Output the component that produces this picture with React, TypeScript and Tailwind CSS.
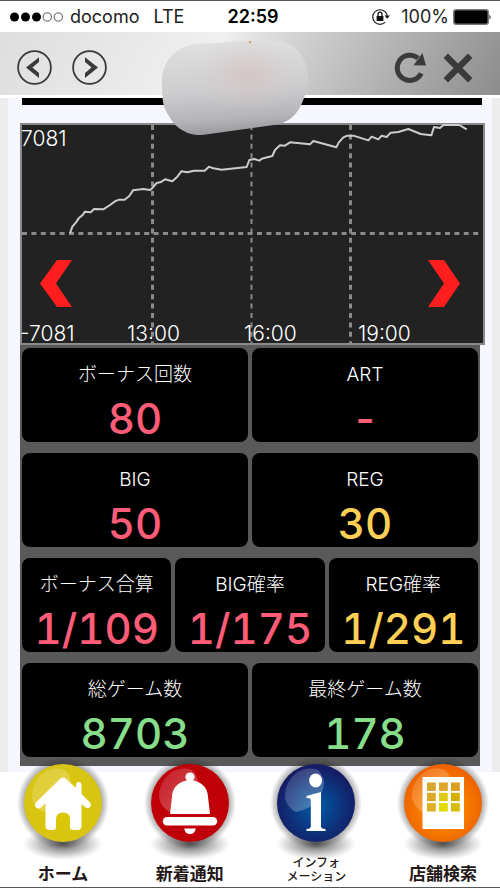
/**
 * Slot machine data page
 * 台データ画面 (グラフ + 各種回数)
 */

import React from 'react';

type Tone = 'pink' | 'yellow' | 'green';

interface Stat {
  label: string;
  value: string;
  tone: Tone;
}

const TONES: Record<Tone, string> = {
  pink: 'text-[#ff5c78]',
  yellow: 'text-[#ffd055]',
  green: 'text-[#86dd8a]',
};

const STAT_ROWS: Stat[][] = [
  [
    { label: 'ボーナス回数', value: '80', tone: 'pink' },
    { label: 'ART', value: '-', tone: 'pink' },
  ],
  [
    { label: 'BIG', value: '50', tone: 'pink' },
    { label: 'REG', value: '30', tone: 'yellow' },
  ],
  [
    { label: 'ボーナス合算', value: '1/109', tone: 'pink' },
    { label: 'BIG確率', value: '1/175', tone: 'pink' },
    { label: 'REG確率', value: '1/291', tone: 'yellow' },
  ],
  [
    { label: '総ゲーム数', value: '8703', tone: 'green' },
    { label: '最終ゲーム数', value: '178', tone: 'green' },
  ],
];

// 差枚グラフ (drawn at 3x, scaled down in the svg)
const SLUMP_LINE =
  '210,370 217,350 228,337 236,325 247,316 255,305 272,307 282,297 310,298 330,285 345,274 357,269 374,269 388,258 399,241 430,237 450,240 458,233 470,219 483,216 495,208 517,214 532,200 544,184 562,187 582,182 614,182 627,170 640,175 665,179 740,171 748,150 763,147 778,152 785,146 817,138 825,120 840,106 855,107 870,97 930,103 940,93 1009,112 1016,98 1030,82 1042,77 1060,77 1105,91 1115,80 1135,88 1145,77 1160,81 1172,68 1195,66 1225,57 1262,72 1294,76 1302,51 1320,54 1330,45 1378,45 1400,58';

const StatusBar: React.FC = () => (
  <div className="grid grid-cols-[1fr_auto_1fr] items-center h-8 pl-[10px] pr-2 bg-white border-t border-[#555555] font-['Inter',sans-serif] text-lg text-[#222222]">
    <div className="flex items-center">
      <svg width="54" height="10" viewBox="0 0 54 10" aria-hidden="true">
        <circle cx="4.5" cy="5" r="4.5" fill="#000" />
        <circle cx="15.5" cy="5" r="4.5" fill="#000" />
        <circle cx="26.5" cy="5" r="4.5" fill="#000" />
        <circle cx="37.3" cy="5" r="4.1" fill="none" stroke="#555" />
        <circle cx="48.3" cy="5" r="4.1" fill="none" stroke="#555" />
      </svg>
      <span className="ml-1.5">docomo</span>
      <span className="ml-3.5">LTE</span>
    </div>
    <span className="pl-1 font-semibold text-black">22:59</span>
    <div className="flex items-center justify-end">
      <svg width="20" height="18" viewBox="0 0 20 18" aria-hidden="true">
        <path d="M14.5 4.2A7.3 7.3 0 1 0 14.2 14.2M14.5 4.2A7.3 7.3 0 0 1 16.2 8" fill="none" stroke="#222" strokeWidth="1.2" />
        <path d="M13.6 7.4h5.2l-2.6 3.4z" fill="#111" />
        <rect x="5.6" y="8" width="6.8" height="5" fill="#111" />
        <path d="M7 8V6.2a2 2 0 0 1 4 0V8" fill="none" stroke="#111" strokeWidth="1.3" />
      </svg>
      <span className="ml-2.5">100%</span>
      <svg className="ml-1" width="39" height="16" viewBox="0 0 39 16" aria-hidden="true">
        <rect x="0.8" y="0.8" width="34.4" height="14.4" rx="2.5" fill="#000" stroke="#777" strokeWidth="1.5" />
        <path d="M36.5 5.2q2.2 2.8 0 5.6z" fill="#111" />
      </svg>
    </div>
  </div>
);

const BrowserBar: React.FC = () => (
  <header className="relative z-10 flex items-center justify-between h-[66px] pl-[17px] pr-[27px] pt-2 border-b-3 border-white bg-[linear-gradient(118deg,#dedede_0%,#e6e6e6_20%,#f0f0f0_42%,#d4d4d4_55%,#b4b4b4_75%,#8c8c8c_100%)]">
    <div className="flex gap-5">
      <button type="button" aria-label="戻る">
        <svg className="block" width="35" height="35" viewBox="0 0 35 35">
          <circle cx="17.5" cy="17.5" r="16.4" fill="none" stroke="#3a3a3a" strokeWidth="1.8" />
          <path d="M22 7.2V12L15.4 17.5L22 23V28L9 17.5Z" fill="#3a3a3a" />
        </svg>
      </button>
      <button type="button" aria-label="進む">
        <svg className="block" width="35" height="35" viewBox="0 0 35 35">
          <circle cx="17.5" cy="17.5" r="16.4" fill="none" stroke="#3a3a3a" strokeWidth="1.8" />
          <path d="M13 7.2V12L19.6 17.5L13 23V28L26 17.5Z" fill="#3a3a3a" />
        </svg>
      </button>
    </div>
    {/* ぼかし */}
    <svg className="absolute left-1/2 top-2 -ml-[88px]" width="150" height="98" viewBox="0 0 150 98" aria-hidden="true">
      <defs>
        <linearGradient id="smudge" x1="0.45" y1="0" x2="0.55" y2="1">
          <stop offset="0" stopColor="#e0e0e0" />
          <stop offset="0.5" stopColor="#cdcdcf" />
          <stop offset="0.8" stopColor="#b4b4b8" />
          <stop offset="1" stopColor="#8e8e92" />
        </linearGradient>
        <radialGradient id="smudgeTint">
          <stop offset="0" stopColor="#d6bebc" stopOpacity="0.6" />
          <stop offset="1" stopColor="#d8c8c8" stopOpacity="0" />
        </radialGradient>
        <clipPath id="smudgeShape">
          <path d="M0 42C0 22 12 7 34 4L90 1H116C134 3 146 18 146 38C145 52 141 62 138 67C133 77 125 83 112 85L40 95C22 96 11 84 7 76C1 68 0 60 0 42Z" />
        </clipPath>
      </defs>
      <g clipPath="url(#smudgeShape)">
        <rect width="150" height="98" fill="url(#smudge)" />
        <ellipse cx="86" cy="34" rx="52" ry="38" fill="url(#smudgeTint)" />
      </g>
      <rect x="87" y="1" width="2" height="2" fill="#e8935a" />
    </svg>
    <div className="flex gap-3.5">
      <button type="button" aria-label="更新">
        <svg className="block" width="35" height="34" viewBox="0 0 35 34">
          <path d="M27.2 22.4A12.6 12.6 0 1 1 24 7.2" fill="none" stroke="#3a3a3a" strokeWidth="5" />
          <path d="M28.4 2L32 14.4L19.6 14.2Z" fill="#3a3a3a" />
        </svg>
      </button>
      <button type="button" aria-label="閉じる">
        <svg className="block" width="30" height="34" viewBox="0 0 30 34">
          <path d="M2.8 4.8L27.2 29.2M27.2 4.8L2.8 29.2" stroke="#3a3a3a" strokeWidth="6.2" />
        </svg>
      </button>
    </div>
  </header>
);

const SlumpChart: React.FC = () => (
  <section className="relative ml-5 mr-[15px]">
    <svg className="block w-full overflow-visible" viewBox="0 0 465 222" role="img" aria-label="差枚グラフ">
      <rect x="1" y="1" width="463" height="220" fill="#222222" stroke="#8a8a8a" strokeWidth="2" />
      <g stroke="#8a8a8a" strokeWidth="3" strokeDasharray="5 4.4">
        <path d="M2 110.5H462" />
        <path d="M132.5 2V220" />
        <path d="M231.5 2V220" strokeWidth="2" />
        <path d="M330.5 2V220" />
      </g>
      <polyline
        points={SLUMP_LINE}
        transform="translate(-20 -13) scale(0.33333)"
        fill="none"
        stroke="#cccccc"
        strokeWidth="6"
        strokeLinejoin="round"
      />
      <g className="fill-white font-['Inter',sans-serif] text-[21px] font-light">
        <text x="1" y="23">7081</text>
        <text x="0" y="218">-7081</text>
        <text x="107" y="218">13:00</text>
        <text x="224" y="218">16:00</text>
        <text x="338" y="218">19:00</text>
      </g>
    </svg>
    <button type="button" aria-label="前の日" className="absolute left-5 bottom-[38px]">
      <svg className="block" width="33" height="47" viewBox="0 0 33 47">
        <path d="M17 0H32L16 23.5L32 47H17L0 23.5Z" fill="#ff1e1e" />
      </svg>
    </button>
    <button type="button" aria-label="次の日" className="absolute right-6 bottom-[38px]">
      <svg className="block" width="33" height="47" viewBox="0 0 33 47">
        <path d="M0 0H16L32 23.5L16 47H0L16 23.5Z" fill="#ff1e1e" />
      </svg>
    </button>
  </section>
);

const StatCard: React.FC<{ stat: Stat }> = ({ stat }) => (
  <div className="flex-1 flex flex-col items-center h-[94px] pt-[11px] rounded-lg bg-black">
    <dt className="font-['Inter','Noto_Sans_CJK_JP',sans-serif] text-[19px] leading-8 font-light text-white">
      {stat.label}
    </dt>
    <dd className={`font-['Inter',sans-serif] text-[42px] leading-[56px] font-medium tabular-nums ${TONES[stat.tone]}`}>
      {stat.value}
    </dd>
  </div>
);

/* Glossy round badge with the drop shadow under it */
const Badge: React.FC<{ id: string; from: string; to: string; children: React.ReactNode }> = ({ id, from, to, children }) => (
  <svg className="block" width="92" height="104" viewBox="0 0 92 104" aria-hidden="true">
    <defs>
      <radialGradient id={`${id}-fill`} cx="0.5" cy="0.55" r="0.52">
        <stop offset="0" stopColor={from} />
        <stop offset="1" stopColor={to} />
      </radialGradient>
      <radialGradient id={`${id}-halo`}>
        <stop offset="0.8" stopColor="#222" stopOpacity="0.45" />
        <stop offset="1" stopColor="#222" stopOpacity="0" />
      </radialGradient>
      <radialGradient id={`${id}-shadow`}>
        <stop offset="0" stopColor="#332f2f" stopOpacity="0.8" />
        <stop offset="0.6" stopColor="#555" stopOpacity="0.35" />
        <stop offset="1" stopColor="#777" stopOpacity="0" />
      </radialGradient>
      <linearGradient id={`${id}-gloss`} x1="0" y1="0" x2="1" y2="1">
        <stop offset="0" stopColor="#fff" stopOpacity="0.12" />
        <stop offset="1" stopColor="#fff" stopOpacity="0.3" />
      </linearGradient>
    </defs>
    <circle cx="46" cy="46" r="46" fill={`url(#${id}-halo)`} />
    <ellipse cx="46" cy="87" rx="40" ry="16" fill={`url(#${id}-shadow)`} />
    <circle cx="46" cy="46" r="39" fill={`url(#${id}-fill)`} />
    <path d="M26 55A20 21 0 0 1 15 41A25 28 0 0 1 48 13A20 20 0 0 1 54 26Q51 50 26 55Z" fill={`url(#${id}-gloss)`} />
    {children}
  </svg>
);

const HomeBadge = () => (
  <Badge id="home" from="#dcc800" to="#d8c416">
    <path
      d="M43.5 21.5Q46 19.5 48.5 21.5L59 31V28Q59 25 61.7 25Q64.5 25 64.5 28V37L73 45.5Q75 48 73 50Q71 52 68.5 50.5L64.5 47V69Q64.5 73 60.5 73H56Q53 73 53 70V62Q53 55.5 46 55.5Q39 55.5 39 62V70Q39 73 36 73H32.5Q28.5 73 28.5 69V46L24 50.5Q21 52.5 19 50.5Q17 48 19 45.5Z"
      fill="#fff"
    />
  </Badge>
);

const BellBadge = () => (
  <Badge id="bell" from="#c4000b" to="#be0008">
    <g fill="#fff">
      <circle cx="46" cy="20" r="4.6" />
      <rect x="43.5" y="20" width="5" height="9" />
      <path d="M46 23C56 23.5 64 30 64 40L66 57H26L28 40C28 30 36 23.5 46 23Z" />
      <rect x="18.8" y="60" width="54.4" height="8.6" rx="4.3" />
      <path d="M40.2 71.5H51.8Q50.8 77 46 77Q41.2 77 40.2 71.5Z" />
    </g>
  </Badge>
);

const InfoBadge = () => (
  <Badge id="info" from="#005ba8" to="#151c65">
    <g fill="#fff">
      <ellipse cx="45.6" cy="23.5" rx="6.4" ry="7" />
      <path d="M36.5 39L51 35V69.5Q51.2 72 55.5 72V74H36.5V72Q40.5 72 40.8 69.5V43Q40.7 40.6 36.5 41Z" />
    </g>
  </Badge>
);

const STORE_WINDOWS = [
  ['#d8a62c', '#dda52a', '#d89e1c'],
  ['#dca929', '#e0ca14', '#d6b000'],
  ['#dfae22', '#e4da00', '#d6bc00'],
];

const StoreBadge = () => (
  <Badge id="store" from="#ff9c00" to="#ef6300">
    <rect x="25.5" y="20" width="41.5" height="52" fill="#fff" />
    {STORE_WINDOWS.map((row, r) =>
      row.map((color, c) => (
        <rect key={`${r}-${c}`} x={30 + c * 12} y={25.5 + r * 10.3} width="8.8" height="8.4" fill={color} />
      ))
    )}
  </Badge>
);

const TabLink: React.FC<{ children: React.ReactNode; label: React.ReactNode; small?: boolean }> = ({ children, label, small }) => (
  <a href="#" className="flex flex-col items-center w-28">
    {children}
    <span
      className={`-mt-1.5 h-7 flex items-end justify-center text-center text-[#231815] font-['Noto_Sans_CJK_JP',sans-serif] ${
        small ? 'text-xs leading-[14px] font-medium' : 'text-[17px] leading-5 font-bold'
      }`}
    >
      {label}
    </span>
  </a>
);

export default function App() {
  return (
    <div className="bg-white">
      <StatusBar />
      <BrowserBar />

      <main className="border-x-8 border-[#ececed] bg-[#f6f6ff] pb-1.5">
        <div className="-mx-2">
          <div className="ml-[22px] mr-[18px] h-[7px] bg-black" />
          <div className="h-[18px]" />
          <SlumpChart />
          <dl className="flex flex-col gap-[11px] mx-5 px-0.5 pt-[3px] pb-[9px] bg-[#595959]">
            {STAT_ROWS.map((row, i) => (
              <div key={i} className="flex gap-1">
                {row.map((stat) => (
                  <StatCard key={stat.label} stat={stat} />
                ))}
              </div>
            ))}
          </dl>
        </div>
      </main>

      {/* Bottom tabs */}
      <nav className="relative flex justify-between -mt-[15px] pl-[7px] pr-px pb-1 border-b border-[#555555]">
        <TabLink label="ホーム">
          <HomeBadge />
        </TabLink>
        <TabLink label="新着通知">
          <BellBadge />
        </TabLink>
        <TabLink
          small
          label={
            <span>
              インフォ
              <br />
              メーション
            </span>
          }
        >
          <InfoBadge />
        </TabLink>
        <TabLink label="店舗検索">
          <StoreBadge />
        </TabLink>
      </nav>
    </div>
  );
}
